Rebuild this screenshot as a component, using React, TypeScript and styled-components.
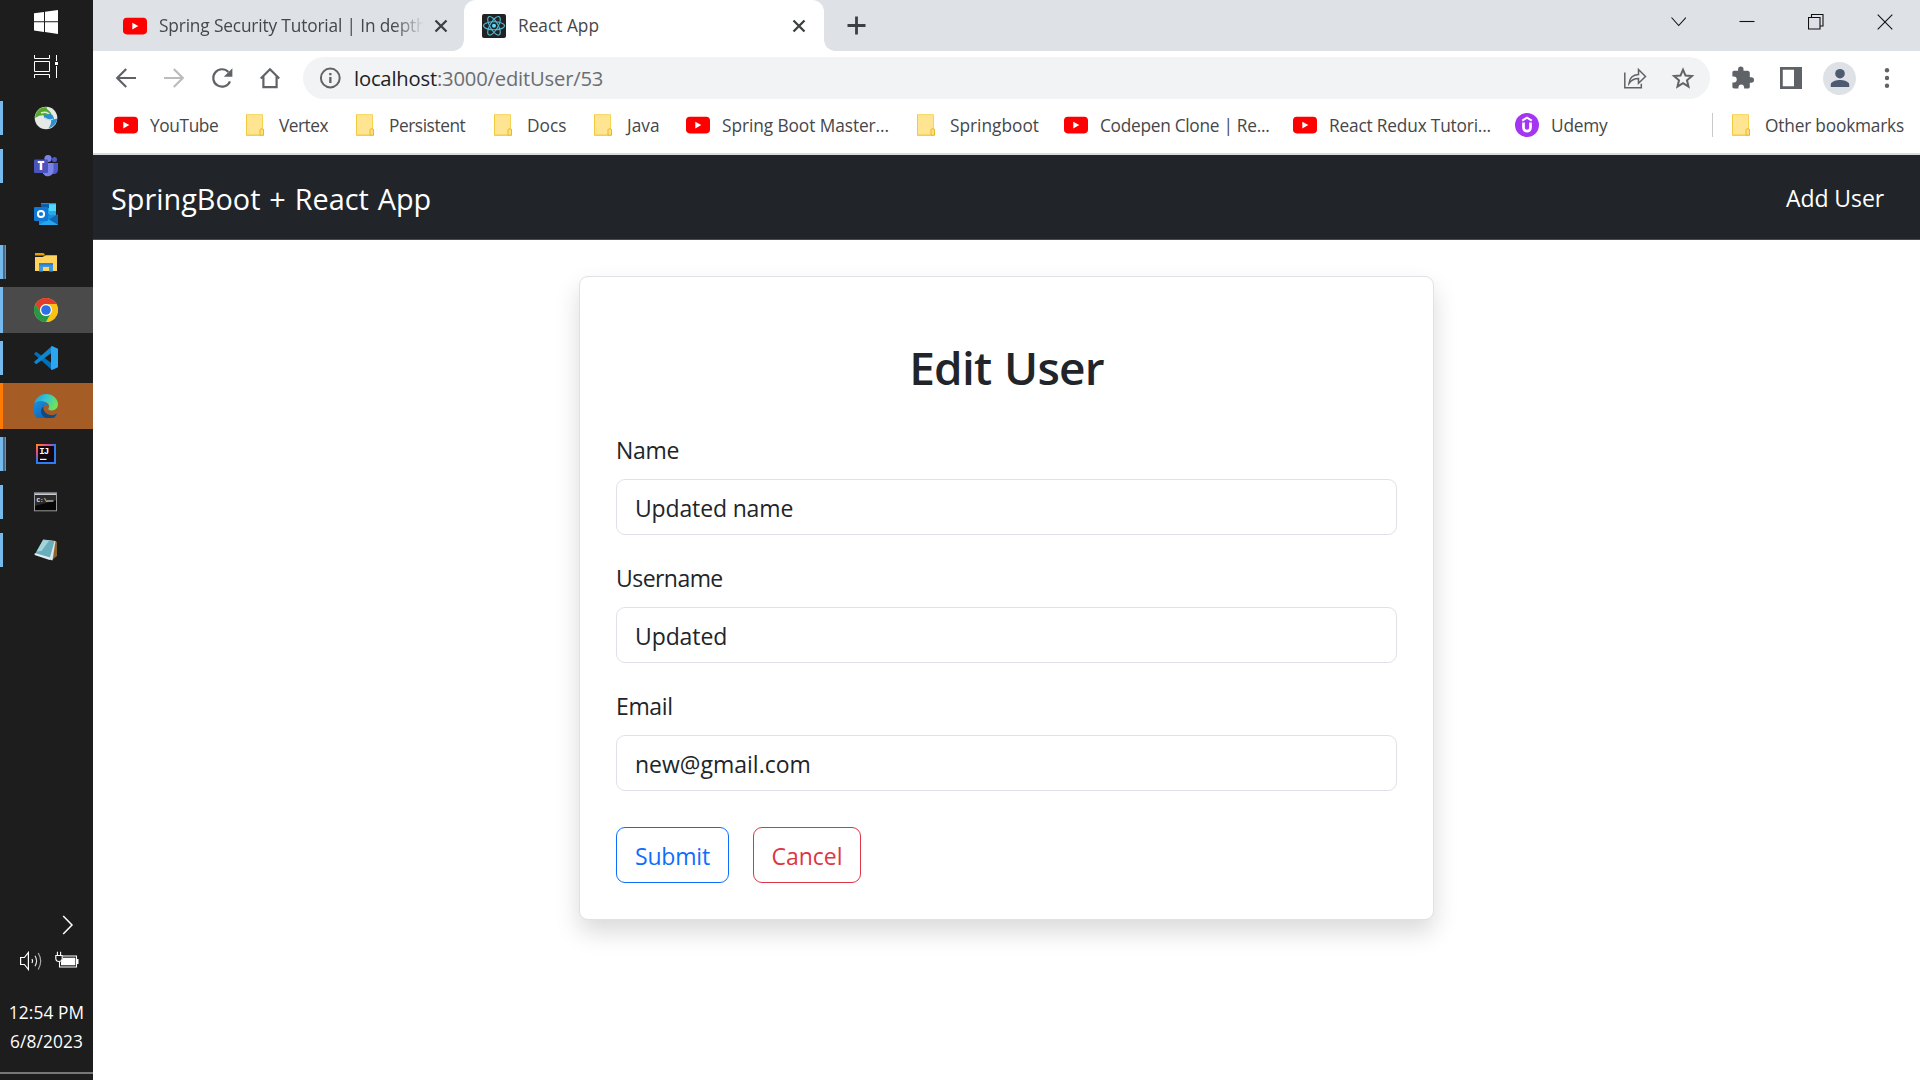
import React, { useState } from 'react';
import type { ReactNode } from 'react';
import styled, { createGlobalStyle } from 'styled-components';

const GlobalStyle = createGlobalStyle`
  *, *::before, *::after { box-sizing: border-box; }
  html, body { margin: 0; padding: 0; overflow: hidden; }
  body { font-family: "Open Sans", "Noto Sans", sans-serif; background: #fff; }
  svg { display: block; flex: none; }
`;

/* ---------- shell ---------- */

const Desktop = styled.div`
  display: flex;
  width: 1920px;
  height: 1080px;
`;

const Taskbar = styled.aside`
  display: flex;
  flex-direction: column;
  flex: none;
  width: 93px;
  padding-top: 10px;
  background: #1d1d1d;
  color: #fff;
`;

const SystemButton = styled.div<{ $gap: number }>`
  display: flex;
  justify-content: center;
  height: 24px;
  margin-bottom: ${(p) => p.$gap}px;
  padding-right: 1px;
`;

type ItemState = 'idle' | 'running' | 'stacked' | 'active' | 'alert';

const itemBackground: Record<ItemState, string> = {
  idle: 'transparent',
  running: 'transparent',
  stacked: 'transparent',
  active: '#4a4a4a',
  alert: '#a65d25',
};

const TaskItem = styled.div<{ $state: ItemState }>`
  display: flex;
  align-items: center;
  height: 46px;
  margin-bottom: 2px;
  background: ${(p) => itemBackground[p.$state]};
`;

const Indicator = styled.span<{ $state: ItemState }>`
  display: flex;
  flex: none;
  width: 6px;
  height: ${(p) => (p.$state === 'active' || p.$state === 'alert' ? 46 : 34)}px;
  border-left: 3px solid
    ${(p) => (p.$state === 'idle' ? 'transparent' : p.$state === 'alert' ? '#ff7a00' : '#76b9ed')};
  background: ${(p) =>
    p.$state === 'stacked' ? 'linear-gradient(90deg, #476a86 0 2px, #5f95bf 2px 3px)' : 'transparent'};
`;

const IconSlot = styled.span`
  display: flex;
  align-items: center;
  justify-content: center;
  width: 80px;
`;

const Tray = styled.div`
  display: flex;
  flex-direction: column;
  flex: 1;
  justify-content: flex-end;
`;

const TrayRow = styled.div<{ $height: number; $left: number; $gap?: number }>`
  display: flex;
  align-items: center;
  gap: ${(p) => p.$gap ?? 0}px;
  height: ${(p) => p.$height}px;
  padding-left: ${(p) => p.$left}px;
`;

const Clock = styled.div`
  margin-top: 12px;
  height: 74px;
  text-align: center;
  font-size: 17.3px;
  line-height: 29px;
  letter-spacing: 0.14px;
`;

const ShowDesktop = styled.div`
  height: 8px;
  border-top: 2px solid #777;
`;

const Browser = styled.main`
  display: flex;
  flex-direction: column;
  flex: 1;
  min-width: 0;
`;

/* ---------- browser chrome ---------- */

const TabStrip = styled.div`
  display: flex;
  height: 51px;
  background: #dee1e6;
`;

const Tab = styled.div<{ $active?: boolean }>`
  position: relative;
  display: flex;
  align-items: center;
  width: ${(p) => (p.$active ? 360 : 371)}px;
  padding: 0 ${(p) => (p.$active ? 18 : 16)}px 0 ${(p) => (p.$active ? 18 : 30)}px;
  background: ${(p) => (p.$active ? '#fff' : 'transparent')};
  border-radius: ${(p) => (p.$active ? '12px 12px 0 0' : '0')};
  color: #45474a;
  font-size: 17.3px;

  &::before,
  &::after {
    content: '';
    display: ${(p) => (p.$active ? 'block' : 'none')};
    position: absolute;
    bottom: 0;
    width: 11px;
    height: 11px;
  }
  &::before {
    left: -11px;
    background: radial-gradient(circle at 0 0, transparent 10.5px, #fff 11px);
  }
  &::after {
    right: -11px;
    background: radial-gradient(circle at 100% 0, transparent 10.5px, #fff 11px);
  }
`;

const TabTitle = styled.span<{ $spacing: number; $fade?: boolean }>`
  flex: 1;
  margin: 0 10px 0 12px;
  overflow: hidden;
  white-space: nowrap;
  letter-spacing: ${(p) => p.$spacing}px;
  ${(p) => p.$fade && 'mask-image: linear-gradient(90deg, #000 calc(100% - 30px), transparent);'}
`;

const NewTab = styled.div`
  display: flex;
  align-items: center;
  margin-left: 23px;
`;

const WindowControls = styled.div`
  display: flex;
  align-items: center;
  gap: 53px;
  height: 43px;
  margin-left: auto;
  padding-right: 27px;
`;

const Toolbar = styled.div`
  display: flex;
  align-items: center;
  height: 54px;
  padding-left: 21px;
`;

const NavButtons = styled.div`
  display: flex;
  gap: 24px;
`;

const Omnibox = styled.div`
  display: flex;
  align-items: center;
  width: 1407px;
  height: 42px;
  margin-left: 21px;
  padding: 0 15px;
  border-radius: 21px;
  background: #f1f3f4;
`;

const Url = styled.span`
  flex: 1;
  margin-left: 10px;
  color: #6b6e72;
  font-size: 20.2px;
  letter-spacing: -0.18px;

  b {
    color: #202124;
    font-weight: 400;
  }
`;

const OmniActions = styled.div`
  display: flex;
  gap: 24px;
`;

const ToolbarActions = styled.div`
  display: flex;
  align-items: center;
  margin-left: 21px;
`;

const SidePanelSlot = styled.span`
  margin-left: 25px;
`;

const Avatar = styled.span`
  display: flex;
  align-items: center;
  justify-content: center;
  width: 33px;
  height: 33px;
  margin: 0 28px 0 21px;
  border-radius: 50%;
  background: #dee1e6;
`;

const BookmarkBar = styled.div`
  display: flex;
  align-items: center;
  height: 50px;
  padding: 0 16px 8px 21px;
  border-bottom: 2px solid #d9dcdc;
  color: #45474a;
  font-size: 17.3px;
`;

const Bookmark = styled.span<{ $width?: number; $spacing: number }>`
  display: flex;
  align-items: center;
  gap: 12px;
  flex: none;
  width: ${(p) => (p.$width ? `${p.$width}px` : 'auto')};
  white-space: nowrap;
  letter-spacing: ${(p) => p.$spacing}px;
`;

const BarDivider = styled.span`
  width: 1px;
  height: 24px;
  margin: 0 16px 0 auto;
  background: #c8cacd;
`;

/* ---------- page ---------- */

const Navbar = styled.nav`
  display: flex;
  align-items: center;
  justify-content: space-between;
  height: 85px;
  padding: 1px 36px 0 18px;
  border-bottom: 1px solid #4b4a52;
  background: #212529;
  color: #fff;
`;

const Brand = styled.span`
  padding-top: 1px;
  font-size: 28.8px;
  letter-spacing: 0.02px;
  word-spacing: 1.4px;
`;

const NavLink = styled.span`
  padding-top: 1px;
  font-size: 23px;
  letter-spacing: -0.1px;
`;

const Page = styled.section`
  flex: 1;
  padding-top: 36px;
  background: #fff;
`;

const Card = styled.form`
  width: 855px;
  height: 644px;
  margin: 0 auto;
  padding: 36px;
  border: 1px solid #dee2e6;
  border-radius: 9px;
  background: #fff;
  box-shadow: 0 12px 24px rgba(0, 0, 0, 0.15);
  color: #212529;
`;

const Heading = styled.h2`
  margin: 25px 0 35px;
  font-size: 46px;
  font-weight: 600;
  line-height: 58px;
  text-align: center;
  letter-spacing: -0.8px;
  word-spacing: 1.5px;
`;

const Field = styled.label<{ $spacing: number }>`
  display: block;
  margin-bottom: 24px;
  font-size: 23px;
  line-height: 38px;
  letter-spacing: ${(p) => p.$spacing}px;
`;

const TextInput = styled.input<{ $spacing: number }>`
  display: block;
  width: 100%;
  height: 56px;
  margin-top: 10px;
  padding: 2px 18px 0;
  border: 1px solid #dee2e6;
  border-radius: 9px;
  outline: none;
  background: #fff;
  color: #212529;
  font: 23px "Open Sans", "Noto Sans", sans-serif;
  letter-spacing: ${(p) => p.$spacing}px;
`;

const Actions = styled.div`
  display: flex;
  gap: 24px;
  padding-top: 12px;
`;

const OutlineButton = styled.button<{ $color: string; $width: number; $spacing: number }>`
  width: ${(p) => p.$width}px;
  height: 56px;
  padding: 1px 0 0;
  border: 1px solid ${(p) => p.$color};
  border-radius: 9px;
  background: transparent;
  color: ${(p) => p.$color};
  font: 23px "Open Sans", "Noto Sans", sans-serif;
  letter-spacing: ${(p) => p.$spacing}px;
`;

/* ---------- taskbar icons ---------- */

const WindowsIcon = () => (
  <svg width="24" height="24" viewBox="0 0 24 24" fill="#fff">
    <path d="M0 3.3 10 1.9V11.3H0zM11 1.8 24 0V11.3H11zM0 12.3H10V21.9L0 20.5zM11 12.3H24V24L11 22.1z" />
  </svg>
);

const TaskViewIcon = () => (
  <svg width="24" height="24" viewBox="0 0 24 24" fill="none" stroke="#fff" strokeWidth="1">
    <path d="M.5 0v3.5h15V0M.5 6.500h15v10H.5zM.5 23v-3.500h15V23M22.500 0v6M22.500 11v12" />
    <path d="M21 7h3v3h-3z" fill="#fff" stroke="none" />
  </svg>
);

const GlobeIcon = () => (
  <svg width="24" height="24" viewBox="0 0 24 24">
    <circle cx="12" cy="12" r="11.300" fill="#e6e9e6" />
    <path d="M1.300 9C3.500 3 8 .8 13 1.200c-1 1 .5 2.200 2 3.500 2.500 1.500 3 4.500 1.500 7.800-2.500.5-5-.5-6-3C8 9 5 9.500 1.300 12z" fill="#56a82c" />
    <path d="M7 7c5-2 8 0 9.500 3.500" fill="none" stroke="#d9edcf" strokeWidth="1.400" />
    <path d="M9.500 9c.5 4 4 5.500 7.500 5 .5 3-.5 5.500-2.500 8.200 4.500-1 8-4.700 8.700-9.200-1-.6-2-.5-3.200.5C20 9 17 7 13.500 8.500z" fill="#2b8fce" />
    <path d="M11 12c2.500 2.500 5 2.500 8 1" fill="none" stroke="#bfe3f4" strokeWidth="1.300" />
  </svg>
);

const TeamsIcon = () => (
  <svg width="24" height="24" viewBox="0 0 24 24">
    <circle cx="20.500" cy="5.500" r="2.500" fill="#5059c9" />
    <path d="M17 9h7v7a4 4 0 0 1-6 3.500z" fill="#5059c9" />
    <circle cx="14" cy="4.500" r="3.600" fill="#7b83eb" />
    <path d="M9 9h10.500v7.500a5.700 5.700 0 0 1-10.500 3z" fill="#7b83eb" />
    <rect y="5.500" width="14" height="13.500" rx="1" fill="#4b53bc" />
    <text x="7" y="16.200" fill="#fff" fontFamily="Open Sans, sans-serif" fontWeight="800" fontSize="11.500" textAnchor="middle">T</text>
  </svg>
);

const OutlookIcon = () => (
  <svg width="24" height="24" viewBox="0 0 24 24">
    <path d="M7 1h15v13H7z" fill="#0f6cbd" />
    <path d="M7 1h8v5H7z" fill="#0a5ba8" />
    <path d="M15 1h7v5h-7z" fill="#1490df" />
    <path d="M15 1h7v8h-7z" fill="#50d9ff" />
    <path d="M15 1h7v1.200H7V1z" fill="#1490df" />
    <path d="M8 6h7v6H8z" fill="#28a8ea" />
    <path d="M15 9h7v4h-7z" fill="#28a8ea" />
    <path d="M5 13h19v10H5z" fill="#1490df" />
    <path d="m24 12-9 5.500 9 5.500z" fill="#1066b5" />
    <path d="m15 17.500 9 5.500H5z" fill="#28a8ea" />
    <rect y="5" width="14" height="14" rx="1" fill="#0f78d4" />
    <circle cx="7" cy="12" r="3.100" fill="none" stroke="#fff" strokeWidth="2" />
  </svg>
);

const ExplorerIcon = () => (
  <svg width="24" height="24" viewBox="0 0 24 24">
    <path d="M1 3h8.500l2 2.500H1z" fill="#e6a100" />
    <path d="M1 7h7.500l3.500-1.800h11V21H1z" fill="#ffd35c" />
    <path d="M5 21.500V13h14v8.500h-4V17H9v4.500z" fill="#3f97dd" />
    <path d="M5 13h14v2.500H5z" fill="#3080cf" />
  </svg>
);

const ChromeIcon = () => (
  <svg width="24" height="24" viewBox="0 0 24 24">
    <circle cx="12" cy="12" r="12" fill="#fbc116" />
    <path d="M1.600 6A12 12 0 0 1 22.400 6H12a6 6 0 0 0-5.200 9z" fill="#e33b2e" />
    <path d="M1.600 6A12 12 0 0 0 12 24l5.200-9A6 6 0 0 1 6.800 15z" fill="#279847" />
    <path d="M12 6h10.400A12 12 0 0 1 12 24l5.200-9A6 6 0 0 0 12 6z" fill="#fbc116" />
    <circle cx="12" cy="12" r="6" fill="#fff" />
    <circle cx="12" cy="12" r="4.800" fill="#2d6fea" />
  </svg>
);

const CodeIcon = () => (
  <svg width="24" height="24" viewBox="0 0 24 24">
    <path d="M.5 7.200 2.200 5.800 18 17.500V24L.5 8.600a1 1 0 0 1 0-1.400z" fill="#0070b8" />
    <path d="M.5 16.800 2.200 18.200 18 6.500V0L.5 15.400a1 1 0 0 0 0 1.400z" fill="#0e86d0" />
    <path d="m18 0 6 2.800v18.400L18 24l-1-.8V.8z" fill="#2ba5f2" />
  </svg>
);

const EdgeIcon = () => (
  <svg width="24" height="24" viewBox="0 0 24 24">
    <defs>
      <linearGradient id="edgeTop" x1="0" y1="0" x2="1" y2="0.4">
        <stop offset="0" stopColor="#1d94dc" />
        <stop offset="0.5" stopColor="#33c4d4" />
        <stop offset="1" stopColor="#6be35c" />
      </linearGradient>
      <linearGradient id="edgeLow" x1="0" y1="0" x2="0.8" y2="1">
        <stop offset="0" stopColor="#1b8fe0" />
        <stop offset="1" stopColor="#0d57a8" />
      </linearGradient>
    </defs>
    <path d="M.2 10.500C1 4.500 6 0 12 0c7 0 12 5 12 10.300 0 4-3 6.200-6.300 6.200-2.500 0-4-.8-3.300-1.900 1.600-2.300.6-5.600-3.400-6.700C7 6.500 2 7 .2 10.500z" fill="url(#edgeTop)" />
    <path d="M0 12C0 8.500 3.500 6.800 7.500 7.200c4.500.5 7 3 7 5.300-.5-1.500-4-2-5 .5-1.500 4 3 8.500 7.500 8.300 2 0 4-.7 5-1.300.5-.2.600.2.400.5A12 12 0 0 1 0 12z" fill="url(#edgeLow)" />
    <path d="M9.500 12.500c-1 5 4 9 8.500 8.700 2 0 3.500-.7 4.500-1.300.3-.2.500.2.300.5-3 4-8 4.500-12 3-4.500-2-5-8-1.300-10.900z" fill="#124a80" />
  </svg>
);

const IntellijIcon = () => (
  <svg width="20" height="20" viewBox="0 0 20 20">
    <defs>
      <linearGradient id="ijEdge" x1="0" y1="0" x2="0.8" y2="1">
        <stop offset="0" stopColor="#ff8f1f" />
        <stop offset="0.28" stopColor="#f0468a" />
        <stop offset="0.5" stopColor="#2c7df0" />
        <stop offset="1" stopColor="#2c7ef7" />
      </linearGradient>
    </defs>
    <rect width="20" height="20" fill="url(#ijEdge)" />
    <rect x="2" y="2" width="16" height="16" fill="#12050f" />
    <text x="3.200" y="10.200" fill="#fff" fontFamily="Liberation Mono, monospace" fontWeight="700" fontSize="9" letterSpacing="-0.800">IJ</text>
    <path d="M4 14.800h6.500v1.200H4z" fill="#fff" />
  </svg>
);

const TerminalIcon = () => (
  <svg width="24" height="20" viewBox="0 0 24 20">
    <rect x=".5" y=".8" width="22" height="18" fill="#060606" stroke="#9a9a9a" />
    <path d="M1 1.300h21v1.900H1z" fill="#c9ced4" />
    <path d="M1 3.200h21v5L1 14z" fill="#2a2a2a" />
    <text x="2.500" y="9.500" fill="#eee" fontFamily="Liberation Mono, monospace" fontWeight="700" fontSize="6">C:\</text>
    <path d="M13 9h6.500" stroke="#eee" />
  </svg>
);

const NotepadIcon = () => (
  <svg width="24" height="24" viewBox="0 0 24 24">
    <path d="m21 3 2 1v14l-5 4z" fill="#8b6330" />
    <path d="M9 1.500 21.500 3 18.500 22.500 14 21z" fill="#dfe8e8" />
    <path d="M9 2 20.500 3.300 15.500 21 .8 16.500z" fill="#68aebd" />
    <path d="M9 2 15 2.700 7.500 13 2.500 13.500z" fill="#a5d3da" />
    <path d="m.8 15 15.400 4.600-.5 2.400L.6 17z" fill="#e3eded" />
  </svg>
);

/* ---------- browser icons ---------- */

const stroke = { fill: 'none', stroke: '#5f6368', strokeWidth: 2.2 } as const;

const YouTubeIcon = () => (
  <svg width="24" height="24" viewBox="0 0 24 24">
    <rect y="3.800" width="24" height="16.600" rx="3.800" fill="#f00" />
    <path d="M9.300 8.800v6.600L15.300 12.100z" fill="#fff" />
  </svg>
);

const ReactIcon = () => (
  <svg width="24" height="24" viewBox="0 0 24 24">
    <rect width="24" height="24" rx="2" fill="#222" />
    <g fill="none" stroke="#53b9d6" strokeWidth="1.100">
      <ellipse cx="12" cy="11.800" rx="10.500" ry="4" />
      <ellipse cx="12" cy="11.800" rx="10.500" ry="4" transform="rotate(60 12 11.800)" />
      <ellipse cx="12" cy="11.800" rx="10.500" ry="4" transform="rotate(120 12 11.800)" />
    </g>
    <circle cx="12" cy="11.800" r="2" fill="#61dafb" />
  </svg>
);

const FolderIcon = () => (
  <svg width="24" height="24" viewBox="0 0 24 24">
    <path d="M3.500 1.700h16v14.500h1v6h-17z" fill="#ffe591" stroke="#f7d354" />
    <path d="M3.500 1.700v20.500h13.500" fill="none" stroke="#f0c93f" />
    <path d="M17 22.200v-5.500q0-.9 1.800-.9t1.700.9v5.500z" fill="#ffe07a" stroke="#e5b92c" />
  </svg>
);

const UdemyIcon = () => (
  <svg width="24" height="24" viewBox="0 0 24 24">
    <circle cx="12" cy="12" r="12" fill="#a435f0" />
    <path d="m7.200 7.600 4.800-2.900 4.800 2.900" fill="none" stroke="#fff" strokeWidth="2.100" />
    <path d="M8.500 9.500v5.200a3.500 3.500 0 0 0 7 0V9.500" fill="none" stroke="#fff" strokeWidth="2.700" />
  </svg>
);

const CloseIcon = () => (
  <svg width="14" height="14" viewBox="0 0 14 14" stroke="#3c4043" strokeWidth="2.300">
    <path d="m1.500 1.500 11 11m0-11-11 11" />
  </svg>
);

const ArrowIcon = ({ forward }: { forward?: boolean }) => (
  <svg width="24" height="24" viewBox="0 0 24 24" {...stroke} stroke={forward ? '#babcbe' : '#5f6368'}>
    {forward ? <path d="M2 12h18M11.800 3l9 9-9 9" /> : <path d="M22 12H4M12.200 3l-9 9 9 9" />}
  </svg>
);

const ReloadIcon = () => (
  <svg width="24" height="24" viewBox="0 0 24 24">
    <path d="M20 15.300a8.700 8.700 0 1 1-1.600-9.200" {...stroke} />
    <path d="M22.400 2.200v8.500h-8.600z" fill="#5f6368" />
  </svg>
);

const HomeIcon = () => (
  <svg width="24" height="24" viewBox="0 0 24 24" {...stroke}>
    <path d="m2.800 12.500 9.200-9.200 9.200 9.200" />
    <path d="M5.400 10.500v10.600h13.200V10.500" />
  </svg>
);

const InfoIcon = () => (
  <svg width="26" height="24" viewBox="0 0 26 24">
    <circle cx="12.300" cy="12" r="9.400" {...stroke} strokeWidth={2} />
    <path d="M11.200 11h2.300v6h-2.300zM11.200 7h2.300v2.300h-2.300z" fill="#5f6368" />
  </svg>
);

const ShareIcon = () => (
  <svg width="24" height="24" viewBox="0 0 24 24" {...stroke} strokeWidth={1.500}>
    <path d="M1.800 6.500v15.200h16.500v-4" />
    <path d="M6 17.500c.6-6 4-8.700 9.500-9V3.500l7 7-7 6.800v-4.700c-4-.1-7 1.400-9.500 4.900z" />
  </svg>
);

const StarIcon = () => (
  <svg width="24" height="24" viewBox="0 0 24 24" {...stroke} strokeWidth={2}>
    <path d="m12 3.700 2.500 5.900 6.400.5-4.900 4.200 1.500 6.300-5.500-3.400-5.500 3.400L8 14.300l-4.900-4.200 6.400-.5z" />
  </svg>
);

const PuzzleIcon = () => (
  <svg width="24" height="24" viewBox="0 0 24 24" fill="#5f6368">
    <path d="M20.300 11.300h-1.500V7c0-1.200-.9-2.200-2.100-2.200h-4.200V3.200a2.700 2.700 0 0 0-5.400 0v1.600H3.200C2 4.800 1.400 5.600 1.400 6.800v3.800h1.400a2.900 2.900 0 0 1 0 5.900H1.400v4.300c0 1 .8 1.700 1.800 1.700h4.200v-1.600a2.900 2.900 0 0 1 5.700 0v1.600h3.900c1 0 1.800-.8 1.800-1.800v-4h1.500a2.700 2.700 0 0 0 0-5.400z" />
  </svg>
);

const SidePanelIcon = () => (
  <svg width="22" height="22" viewBox="0 0 22 22">
    <path d="M0 0h22v22H0zM2.800 2.800v16.400H14V2.800z" fill="#5f6368" fillRule="evenodd" />
  </svg>
);

const PersonIcon = () => (
  <svg width="20" height="20" viewBox="0 0 20 20" fill="#4e5a70">
    <circle cx="10" cy="5.700" r="4.800" />
    <path d="M.8 19v-2.500c0-3 6.200-4.400 9.200-4.400s9.200 1.400 9.200 4.400V19z" />
  </svg>
);

const DotsIcon = () => (
  <svg width="6" height="22" viewBox="0 0 6 22" fill="#5f6368">
    <circle cx="3" cy="3.200" r="2.200" />
    <circle cx="3" cy="11" r="2.200" />
    <circle cx="3" cy="18.800" r="2.200" />
  </svg>
);

const ControlIcon = ({ d }: { d: string }) => (
  <svg width="16" height="16" viewBox="0 0 16 16" fill="none" stroke="#111" strokeWidth="1.100">
    <path d={d} />
  </svg>
);

const ChevronIcon = () => (
  <svg width="12" height="20" viewBox="0 0 12 20" fill="none" stroke="#fff" strokeWidth="1.500">
    <path d="m1.200 1 8.800 9-8.800 9" />
  </svg>
);

const SpeakerIcon = () => (
  <svg width="24" height="20" viewBox="0 0 24 20" fill="none" stroke="#fff" strokeWidth="1.200">
    <path d="M1.600 6.500h3.800l4-5v17l-4-5H1.600z" />
    <path d="M13 8q1.200 2 0 4" />
    <path d="M16 4.800q3.200 5.200 0 10.400" stroke="#ddd" />
    <path d="M19.200 2q5 8 0 16.500" stroke="#aaa" />
  </svg>
);

const BatteryIcon = () => (
  <svg width="24" height="20" viewBox="0 0 24 20" fill="none" stroke="#fff" strokeWidth="1.100">
    <path d="M7.500 5h14v11H4.500V11" />
    <path d="M8 6.700h12.300v7.600H6V11z" fill="#fff" stroke="none" />
    <path d="M22 8h1.500v5H22z" fill="#fff" stroke="none" />
    <path d="M.8 4.500h6.400v3.200Q7 10.500 4 10.500T.8 7.700zM2.400 4.500V.8M5.600 4.500V.8" fill="#1d1d1d" />
  </svg>
);

/* ---------- data ---------- */

const taskItems: { icon: ReactNode; state: ItemState }[] = [
  { icon: <GlobeIcon />, state: 'running' },
  { icon: <TeamsIcon />, state: 'running' },
  { icon: <OutlookIcon />, state: 'idle' },
  { icon: <ExplorerIcon />, state: 'stacked' },
  { icon: <ChromeIcon />, state: 'active' },
  { icon: <CodeIcon />, state: 'running' },
  { icon: <EdgeIcon />, state: 'alert' },
  { icon: <IntellijIcon />, state: 'stacked' },
  { icon: <TerminalIcon />, state: 'running' },
  { icon: <NotepadIcon />, state: 'running' },
];

const bookmarks: { icon: ReactNode; label: string; width: number; spacing: number }[] = [
  { icon: <YouTubeIcon />, label: 'YouTube', width: 129, spacing: -0.38 },
  { icon: <FolderIcon />, label: 'Vertex', width: 110, spacing: -0.5 },
  { icon: <FolderIcon />, label: 'Persistent', width: 138, spacing: -0.43 },
  { icon: <FolderIcon />, label: 'Docs', width: 100, spacing: 0 },
  { icon: <FolderIcon />, label: 'Java', width: 95, spacing: 0 },
  { icon: <YouTubeIcon />, label: 'Spring Boot Master...', width: 228, spacing: -0.07 },
  { icon: <FolderIcon />, label: 'Springboot', width: 150, spacing: 0 },
  { icon: <YouTubeIcon />, label: 'Codepen Clone | Re...', width: 229, spacing: -0.28 },
  { icon: <YouTubeIcon />, label: 'React Redux Tutori...', width: 222, spacing: -0.18 },
  { icon: <UdemyIcon />, label: 'Udemy', width: 110, spacing: -0.21 },
];

const fields = [
  { key: 'name', label: 'Name', labelSpacing: -0.3, spacing: -0.15 },
  { key: 'username', label: 'Username', labelSpacing: -0.55, spacing: -0.1 },
  { key: 'email', label: 'Email', labelSpacing: -0.35, spacing: 0 },
] as const;

export default function App() {
  const [user, setUser] = useState({ name: 'Updated name', username: 'Updated', email: 'new@gmail.com' });

  return (
    <Desktop>
      <GlobalStyle />
      <Taskbar>
        <SystemButton $gap={21}><WindowsIcon /></SystemButton>
        <SystemButton $gap={16}><TaskViewIcon /></SystemButton>
        {taskItems.map((item, i) => (
          <TaskItem key={i} $state={item.state}>
            <Indicator $state={item.state} />
            <IconSlot>{item.icon}</IconSlot>
          </TaskItem>
        ))}
        <Tray>
          <TrayRow $height={22} $left={62}><ChevronIcon /></TrayRow>
          <TrayRow $height={50} $left={19} $gap={12}>
            <SpeakerIcon />
            <BatteryIcon />
          </TrayRow>
          <Clock>
            12:54 PM
            <br />
            6/8/2023
          </Clock>
        </Tray>
        <ShowDesktop />
      </Taskbar>

      <Browser>
        <TabStrip>
          <Tab>
            <YouTubeIcon />
            <TabTitle $spacing={-0.15} $fade>Spring Security Tutorial | In depth</TabTitle>
            <CloseIcon />
          </Tab>
          <Tab $active>
            <ReactIcon />
            <TabTitle $spacing={0}>React App</TabTitle>
            <CloseIcon />
          </Tab>
          <NewTab>
            <svg width="19" height="19" viewBox="0 0 19 19" stroke="#3c4043" strokeWidth="2.800">
              <path d="M9.500.5v18M.5 9.500h18" />
            </svg>
          </NewTab>
          <WindowControls>
            <ControlIcon d="m1.500 3.500 7.200 8 7.200-8" />
            <ControlIcon d="M.5 7.500h15" />
            <ControlIcon d="M.5 3.500h11.500v11.500H.5zM3.500 3.500v-3h11.500v11.500h-3" />
            <ControlIcon d="m.7.700 14.600 14.600m0-14.600L.7 15.300" />
          </WindowControls>
        </TabStrip>

        <Toolbar>
          <NavButtons>
            <ArrowIcon />
            <ArrowIcon forward />
            <ReloadIcon />
            <HomeIcon />
          </NavButtons>
          <Omnibox>
            <InfoIcon />
            <Url><b>localhost</b>:3000/editUser/53</Url>
            <OmniActions>
              <ShareIcon />
              <StarIcon />
            </OmniActions>
          </Omnibox>
          <ToolbarActions>
            <PuzzleIcon />
            <SidePanelSlot><SidePanelIcon /></SidePanelSlot>
            <Avatar><PersonIcon /></Avatar>
            <DotsIcon />
          </ToolbarActions>
        </Toolbar>

        <BookmarkBar>
          {bookmarks.map((b) => (
            <Bookmark key={b.label} $width={b.width} $spacing={b.spacing}>
              {b.icon}
              {b.label}
            </Bookmark>
          ))}
          <BarDivider />
          <Bookmark $spacing={-0.2}>
            <FolderIcon />
            Other bookmarks
          </Bookmark>
        </BookmarkBar>

        <Navbar>
          <Brand>SpringBoot + React App</Brand>
          <NavLink>Add User</NavLink>
        </Navbar>

        <Page>
          <Card onSubmit={(e) => e.preventDefault()}>
            <Heading>Edit User</Heading>
            {fields.map((f) => (
              <Field key={f.key} $spacing={f.labelSpacing}>
                {f.label}
                <TextInput
                  $spacing={f.spacing}
                  value={user[f.key]}
                  onChange={(e) => setUser({ ...user, [f.key]: e.target.value })}
                />
              </Field>
            ))}
            <Actions>
              <OutlineButton type="submit" $color="#0d6efd" $width={113} $spacing={-0.2}>Submit</OutlineButton>
              <OutlineButton type="button" $color="#dc3545" $width={108} $spacing={0}>Cancel</OutlineButton>
            </Actions>
          </Card>
        </Page>
      </Browser>
    </Desktop>
  );
}
